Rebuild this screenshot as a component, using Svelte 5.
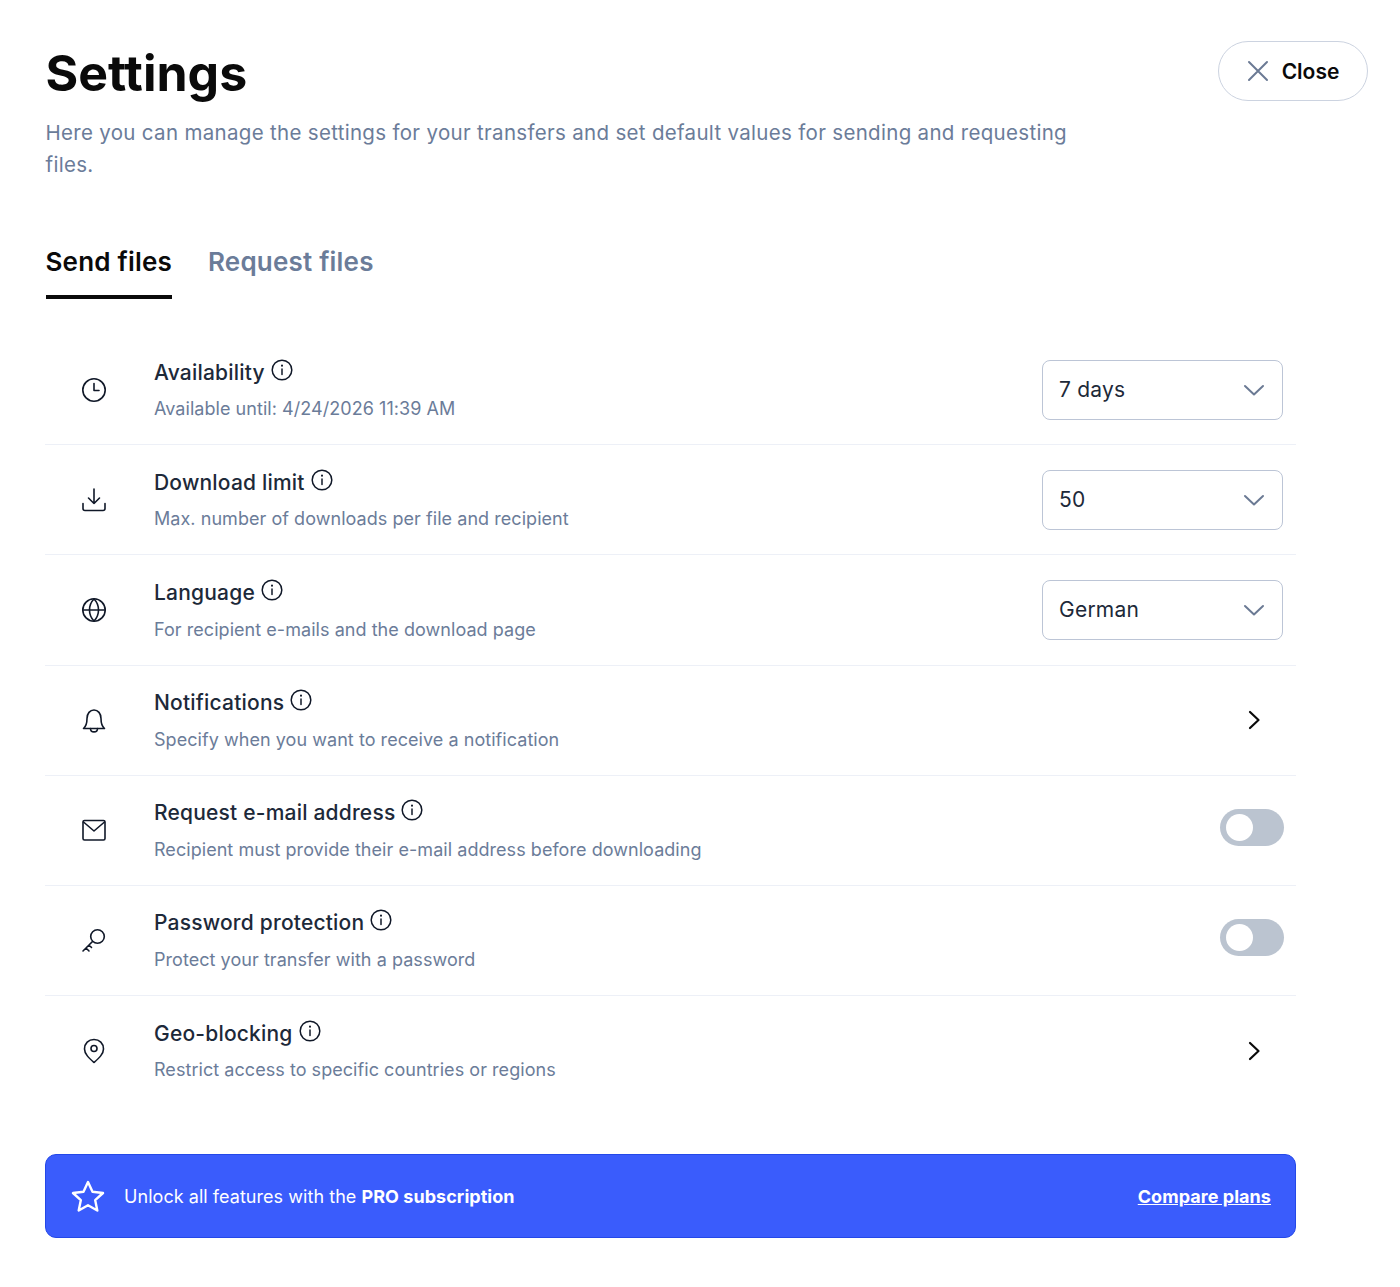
<script>
	const rows = [
		{ icon: 'clock', title: 'Availability', sub: 'Available until: 4/24/2026 11:39 AM', select: '7 days' },
		{ icon: 'download', title: 'Download limit', sub: 'Max. number of downloads per file and recipient', select: '50' },
		{ icon: 'globe', title: 'Language', sub: 'For recipient e-mails and the download page', select: 'German' },
		{ icon: 'bell', title: 'Notifications', sub: 'Specify when you want to receive a notification', arrow: true },
		{ icon: 'mail', title: 'Request e-mail address', sub: 'Recipient must provide their e-mail address before downloading', toggle: true },
		{ icon: 'key', title: 'Password protection', sub: 'Protect your transfer with a password', toggle: true },
		{ icon: 'pin', title: 'Geo-blocking', sub: 'Restrict access to specific countries or regions', arrow: true }
	];
</script>

<main>
	<header class="top">
		<div class="intro">
			<h1>Settings</h1>
			<p>Here you can manage the settings for your transfers and set default values for sending and requesting files.</p>
		</div>
		<button class="close">
			<svg width="24" height="24" viewBox="0 0 24 24" fill="none" stroke="#6b7a94" stroke-width="2" stroke-linecap="round">
				<path d="M3 3l18 18M21 3L3 21" />
			</svg>
			Close
		</button>
	</header>

	<nav class="tabs">
		<span class="tab active">Send files</span>
		<span class="tab">Request files</span>
	</nav>

	<ul>
		{#each rows as row}
			<li>
				<div class="icon">
					<svg width="26" height="26" viewBox="0 0 26 26" fill="none" stroke="#101828" stroke-width="1.6" stroke-linecap="round" stroke-linejoin="round">
						{#if row.icon === 'clock'}
							<circle cx="13" cy="13" r="11.2" />
							<path d="M13 6.5V13.5H18" />
						{:else if row.icon === 'download'}
							<path d="M13 2V16.5M7.5 11L13 16.5L18.5 11" />
							<path d="M2 16.5V21.5Q2 23.5 4 23.5H22Q24 23.5 24 21.5V16.5" />
						{:else if row.icon === 'globe'}
							<circle cx="13" cy="13" r="11.2" />
							<path d="M2 13H24" />
							<path d="M13 2C7 8 7 18 13 24C19 18 19 8 13 2Z" />
						{:else if row.icon === 'bell'}
							<path d="M2.5 21.5C5.5 19 6 16.5 6 11.5C6 6.5 9 3 13 3C17 3 20 6.5 20 11.5C20 16.5 20.5 19 23.5 21.5Z" />
							<path d="M9.5 21.5C9.5 26 16.5 26 16.5 21.5" />
						{:else if row.icon === 'mail'}
							<rect x="2" y="3.5" width="22" height="19.5" rx="1.5" />
							<path d="M2.5 5L13 14L23.5 5" />
						{:else if row.icon === 'key'}
							<circle cx="16.5" cy="9.5" r="6.8" />
							<path d="M11.5 14.5L2 24M5 21L8 24M8 18L10.5 20.5" />
						{:else if row.icon === 'pin'}
							<path d="M13 24.5C8 20 3.5 16 3.5 11C3.5 5.5 7.5 1.5 13 1.5C18.5 1.5 22.5 5.5 22.5 11C22.5 16 18 20 13 24.5Z" />
							<circle cx="13" cy="10.5" r="3" />
						{/if}
					</svg>
				</div>
				<div class="text">
					<div class="title">
						{row.title}
						<svg class="info" width="22" height="22" viewBox="0 0 22 22" fill="none" stroke="#101828" stroke-width="1.5" stroke-linecap="round">
							<circle cx="11" cy="11" r="9.8" />
							<path d="M11 10V15.5" />
							<path d="M11 6.6V6.7" stroke-width="2" />
						</svg>
					</div>
					<div class="sub">{row.sub}</div>
				</div>
				{#if row.select}
					<div class="select">
						{row.select}
						<svg width="22" height="12" viewBox="0 0 22 12" fill="none" stroke="#6b7a94" stroke-width="2" stroke-linecap="round" stroke-linejoin="round">
							<path d="M2 2L11 10.5L20 2" />
						</svg>
					</div>
				{:else if row.toggle}
					<div class="toggle"><span></span></div>
				{:else if row.arrow}
					<svg class="arrow" width="14" height="20" viewBox="0 0 14 20" fill="none" stroke="#0a0a0a" stroke-width="2.2" stroke-linecap="round" stroke-linejoin="round">
						<path d="M3 2L11.5 10L3 18" />
					</svg>
				{/if}
			</li>
		{/each}
	</ul>

	<div class="promo">
		<svg width="34" height="32" viewBox="0 0 34 32" fill="none" stroke="#fff" stroke-width="2.4" stroke-linejoin="round">
			<path d="M17 2L21.5 11.8L32 13L24.2 20.2L26.3 30.5L17 25.3L7.7 30.5L9.8 20.2L2 13L12.5 11.8Z" />
		</svg>
		<span class="promo-text">Unlock all features with the <strong>PRO subscription</strong></span>
		<a href="#plans">Compare plans</a>
	</div>
</main>

<style>
	:global(body) {
		background: #fff;
		font-family: Inter, 'Liberation Sans', sans-serif;
	}

	main {
		width: 1251px;
		height: 1287px;
		box-sizing: border-box;
		margin-left: 45px;
		padding-top: 43px;
		position: relative;
	}

	.top {
		display: flex;
		padding-left: 0.5px;
	}

	.intro {
		width: 1040px;
	}

	h1 {
		margin: 0;
		font-size: 50px;
		line-height: 60px;
		font-weight: 700;
		color: #0a0a0a;
	}

	.intro p {
		margin: 14px 0 0;
		font-size: 20.5px;
		line-height: 32px;
		color: #6b7c99;
		letter-spacing: 0.31px;
	}

	.close {
		position: absolute;
		top: 41px;
		left: 1172.5px;
		width: 150px;
		height: 60px;
		box-sizing: border-box;
		border: 1.5px solid #ccd3e0;
		border-radius: 30px;
		background: #fff;
		display: flex;
		align-items: center;
		justify-content: center;
		gap: 12px;
		font: 600 21px Inter, sans-serif;
		color: #0a0a0a;
	}

	.tabs {
		display: flex;
		gap: 36px;
		margin-top: 62px;
		padding-left: 0.5px;
	}

	.tab {
		font-size: 26px;
		font-weight: 600;
		letter-spacing: 0.2px;
		line-height: 38px;
		padding-bottom: 14px;
		color: #6b7c99;
		border-bottom: 4px solid transparent;
	}

	.tab.active {
		color: #0a0a0a;
		border-bottom-color: #0a0a0a;
	}

	ul {
		list-style: none;
		margin: 36.25px 0 0;
		padding: 0;
	}

	li {
		display: flex;
		align-items: center;
		height: 110.1px;
		box-sizing: border-box;
		border-bottom: 1.5px solid #edf0f7;
		padding-right: 12.9px;
	}

	li:last-child {
		border-bottom: 0;
	}

	.icon {
		width: 109px;
		padding-left: 35.5px;
		box-sizing: border-box;
		flex: none;
		display: flex;
	}

	.text {
		flex: 1;
		padding-top: 0.8px;
	}

	.title {
		font-size: 21px;
		font-weight: 500;
		letter-spacing: 0.2px;
		line-height: 30px;
		color: #1d2939;
		display: flex;
		align-items: center;
		gap: 6px;
	}

	.info {
		margin-top: -6px;
	}

	.sub {
		font-size: 18px;
		letter-spacing: 0.05px;
		line-height: 26px;
		margin-top: 8.4px;
		color: #6b7c99;
	}

	.select {
		width: 241px;
		height: 60px;
		box-sizing: border-box;
		border: 1.5px solid #bcc5d6;
		border-radius: 8px;
		display: flex;
		align-items: center;
		justify-content: space-between;
		padding: 0 17.5px 0 16px;
		font-size: 21px;
		letter-spacing: 0.2px;
		color: #1d2939;
	}

	.toggle {
		width: 64px;
		height: 37px;
		border-radius: 19px;
		background: #bbc4d0;
		padding: 5px 6.5px;
		box-sizing: border-box;
		margin: -6px -0.7px 0 0;
	}

	.toggle span {
		display: block;
		width: 27px;
		height: 27px;
		border-radius: 50%;
		background: #fff;
	}

	.arrow {
		margin-right: 22px;
	}

	.promo {
		margin-top: 48.4px;
		height: 83.5px;
		box-sizing: border-box;
		border-radius: 11px;
		background: #3a5cfc;
		border: 1px solid #2448e8;
		display: flex;
		align-items: center;
		padding: 0 24px 0 25px;
		color: #fff;
		font-size: 18px;
		letter-spacing: 0.05px;
	}

	.promo-text {
		flex: 1;
		margin-left: 19px;
	}

	.promo strong {
		font-weight: 700;
	}

	.promo a {
		color: #fff;
		font-weight: 700;
		text-decoration: underline;
	}
</style>
